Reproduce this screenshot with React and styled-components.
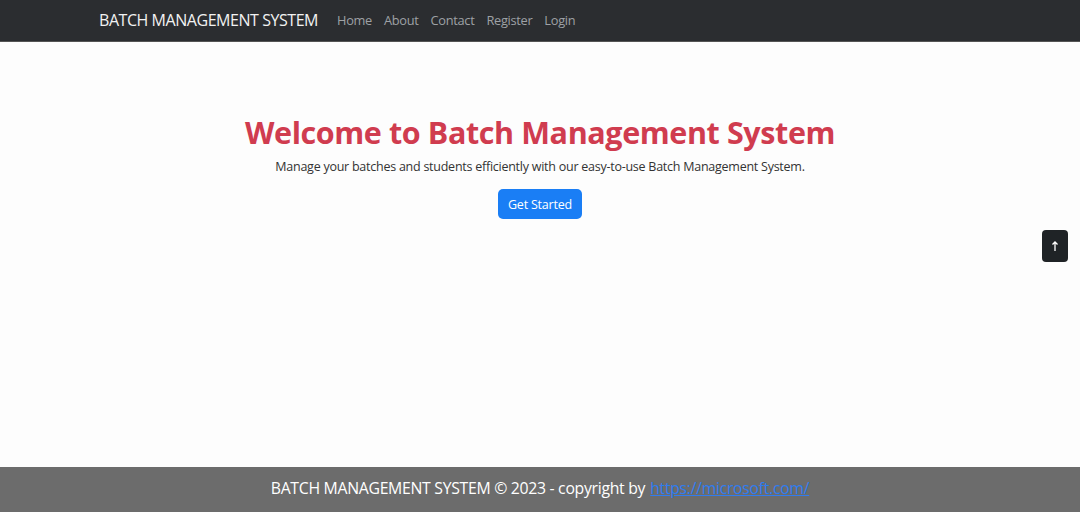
import styled, { createGlobalStyle } from "styled-components";

const GlobalStyle = createGlobalStyle`
  html, body {
    margin: 0;
    padding: 0;
    background: #fdfdfd;
    font-family: "Open Sans", "Noto Sans", sans-serif;
  }
`;

const Page = styled.div`
  height: 512px;
  display: flex;
  flex-direction: column;
  position: relative;
`;

const NavBar = styled.nav`
  height: 42px;
  background: #2b2d30;
  display: flex;
  align-items: center;
  padding-left: 99px;
  padding-bottom: 1px;
  border-bottom: 1px solid #555;
  box-sizing: border-box;
`;

const Brand = styled.a`
  color: #f2f2f2;
  font-size: 16px;
  letter-spacing: -0.45px;
  margin-right: 19px;
  text-decoration: none;
`;

const NavLinks = styled.div`
  display: flex;
  gap: 12px;
`;

const NavLink = styled.a`
  color: #9ea1a5;
  font-size: 12.8px;
  letter-spacing: -0.3px;
  text-decoration: none;
`;

const Main = styled.main`
  flex: 1;
  display: flex;
  flex-direction: column;
  align-items: center;
  padding-top: 69px;
`;

const Title = styled.h1`
  margin: 0;
  color: #d03c4f;
  font-size: 30.5px;
  font-weight: 700;
  letter-spacing: -0.4px;
`;

const Lead = styled.p`
  margin: 5px 0 14px;
  color: #333;
  font-size: 12.5px;
  letter-spacing: -0.25px;
`;

const Button = styled.button`
  background: #1a7ef5;
  color: #fff;
  border: none;
  border-radius: 5px;
  height: 30px;
  padding: 0 10px;
  font-family: inherit;
  font-size: 12.5px;
  letter-spacing: -0.2px;
`;

const TopButton = styled.button`
  position: absolute;
  right: 12px;
  top: 230px;
  width: 26px;
  height: 32px;
  border: none;
  border-radius: 4px;
  background: #1f2326;
  color: #fff;
  display: flex;
  align-items: center;
  justify-content: center;
  padding: 0;
`;

const Footer = styled.footer`
  height: 45px;
  padding-bottom: 3px;
  box-sizing: border-box;
  background: #6c6c6c;
  display: flex;
  align-items: center;
  justify-content: center;
  color: #fff;
  font-size: 15.8px;
  letter-spacing: -0.3px;

  a {
    color: #2f7cf0;
    margin-left: 5px;
    text-decoration: underline;
  }
`;

export default function App() {
  return (
    <Page>
      <GlobalStyle />
      <NavBar>
        <Brand href="#">BATCH MANAGEMENT SYSTEM</Brand>
        <NavLinks>
          <NavLink href="#">Home</NavLink>
          <NavLink href="#">About</NavLink>
          <NavLink href="#">Contact</NavLink>
          <NavLink href="#">Register</NavLink>
          <NavLink href="#">Login</NavLink>
        </NavLinks>
      </NavBar>
      <Main>
        <Title>Welcome to Batch Management System</Title>
        <Lead>Manage your batches and students efficiently with our easy-to-use Batch Management System.</Lead>
        <Button>Get Started</Button>
      </Main>
      <TopButton>
        <svg width="8" height="12" viewBox="0 0 8 12" fill="none" stroke="#fff" strokeWidth="1.3">
          <path d="M4 11V2M1.5 4.5L4 2l2.5 2.5" />
        </svg>
      </TopButton>
      <Footer>
        BATCH MANAGEMENT SYSTEM © 2023 - copyright by
        <a href="#">https://microsoft.com/</a>
      </Footer>
    </Page>
  );
}
